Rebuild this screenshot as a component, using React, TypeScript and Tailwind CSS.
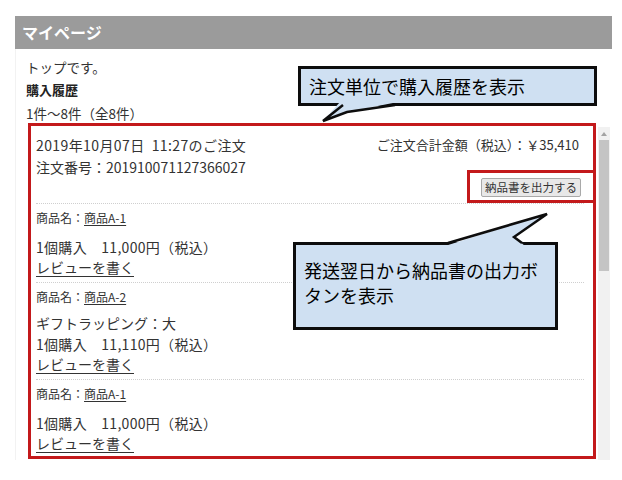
import React from "react";

const jp = "font-['Noto_Sans_CJK_JP','Noto_Sans',sans-serif]";

type Item = { name: string; lines: string[]; gift?: string };

const items: Item[] = [
  { name: "商品A-1", lines: ["1個購入　11,000円（税込）"] },
  { name: "商品A-2", gift: "ギフトラッピング：大", lines: ["1個購入　11,110円（税込）"] },
  { name: "商品A-1", lines: ["1個購入　11,000円（税込）"] },
];

function ItemRow({ item }: { item: Item }) {
  return (
    <div className="border-b border-dotted border-[#cfcfcf] pt-[5px] pb-[5px]">
      <div className="text-[12px] leading-[18px]">
        商品名：<span className="underline underline-offset-2">{item.name}</span>
      </div>
      {item.gift && <div className="mt-[6px] text-[14px] leading-[22px]">{item.gift}</div>}
      <div className={item.gift ? "" : "mt-[10px]"}>
        {item.lines.map((l) => (
          <div key={l} className="text-[14px] leading-[20px] tracking-[0.3px]">
            {l}
          </div>
        ))}
        <div className="text-[14px] leading-[20px]">
          <span className="underline underline-offset-[3px]">レビューを書く</span>
        </div>
      </div>
    </div>
  );
}

export default function App() {
  return (
    <div className={`relative h-[480px] w-[622px] overflow-hidden bg-white text-[#333] ${jp}`}>
      <div className="ml-[15px] w-[597px] pt-[16px]">
        {/* page title */}
        <div className="h-[33px] bg-[#9b9b9b] pl-[7px] text-[16px] font-bold leading-[33px] text-white">
          マイページ
        </div>

        <div className="border-l border-[#f2f2f2] pl-[10px]">
          <p className="pt-[8px] text-[13.5px] leading-[20px]">トップです。</p>
          <h2 className="mt-[3px] text-[13px] font-bold leading-[20px] text-[#222]">購入履歴</h2>
          <p className="mt-[3px] text-[13.5px] leading-[20px]">1件〜8件（全8件）</p>

          {/* order list (scrolling) */}
          <div className="ml-[3px] flex h-[337px] w-[581px]">
            <div className="flex-1 overflow-hidden pl-[7px] pr-[14px]">
              <div className="border-b border-dotted border-[#cfcfcf] pt-[11px] pb-[6px]">
                <div className="flex justify-between pr-[5px] text-[14px] leading-[22px]">
                  <div>
                    <div className="tracking-[0.4px]">2019年10月07日&nbsp;&nbsp;11:27のご注文</div>
                    <div>注文番号：201910071127366027</div>
                  </div>
                  <div className="text-[13px]">ご注文合計金額（税込）：￥35,410</div>
                </div>
                <div className="flex justify-end pr-[3px]">
                  <button className="h-[19px] rounded-[2px] border border-[#a9a9a9] bg-[#e8e8e8] px-[3px] text-[11.5px] leading-[17px] text-[#333]">
                    納品書を出力する
                  </button>
                </div>
              </div>
              {items.map((it, i) => (
                <ItemRow key={i} item={it} />
              ))}
            </div>

            {/* scrollbar */}
            <div className="mt-[4px] flex w-[12px] flex-col bg-[#f1f1f1]">
              <div className="flex h-[13px] items-center justify-center">
                <div className="h-0 w-0 border-x-[3px] border-b-[4px] border-x-transparent border-b-[#a3a3a3]" />
              </div>
              <div className="ml-[1px] h-[131px] w-[10px] bg-[#c4c4c4]" />
            </div>
          </div>
        </div>
      </div>

      {/* annotations */}
      <div className="absolute left-[28px] top-[123px] h-[336px] w-[568px] border-[3px] border-[#c3191b]" />
      <div className="absolute left-[467px] top-[170px] h-[33px] w-[129px] border-[3px] border-[#c3191b]" />

      <div className="absolute left-[298px] top-[66px] h-[40px] w-[299px] border-[3px] border-[#0d0d0d] bg-[#cfe0f2] pl-[8px] text-[18px] leading-[34px] text-black">
        注文単位で購入履歴を表示
      </div>

      <div className="absolute left-[293px] top-[242px] h-[88px] w-[265px] border-[3px] border-[#0d0d0d] bg-[#cfe0f2] pl-[8px] pt-[13px] text-[18px] leading-[25px] text-black">
        発送翌日から納品書の出力ボ
        <br />
        タンを表示
      </div>

      <svg className="pointer-events-none absolute left-0 top-0" width="622" height="480">
        <polygon points="340,102 323,121 347,112 398,102" fill="#cfe0f2" />
        <polyline points="343,105 323,121 347,112 395,105" fill="none" stroke="#0d0d0d" strokeWidth="2.5" strokeLinejoin="miter" />
        <polygon points="445,246 547,214 514,237 525,246" fill="#cfe0f2" />
        <polyline points="448,243 547,214 514,237 522,243" fill="none" stroke="#0d0d0d" strokeWidth="2.5" strokeLinejoin="miter" />
      </svg>
    </div>
  );
}
